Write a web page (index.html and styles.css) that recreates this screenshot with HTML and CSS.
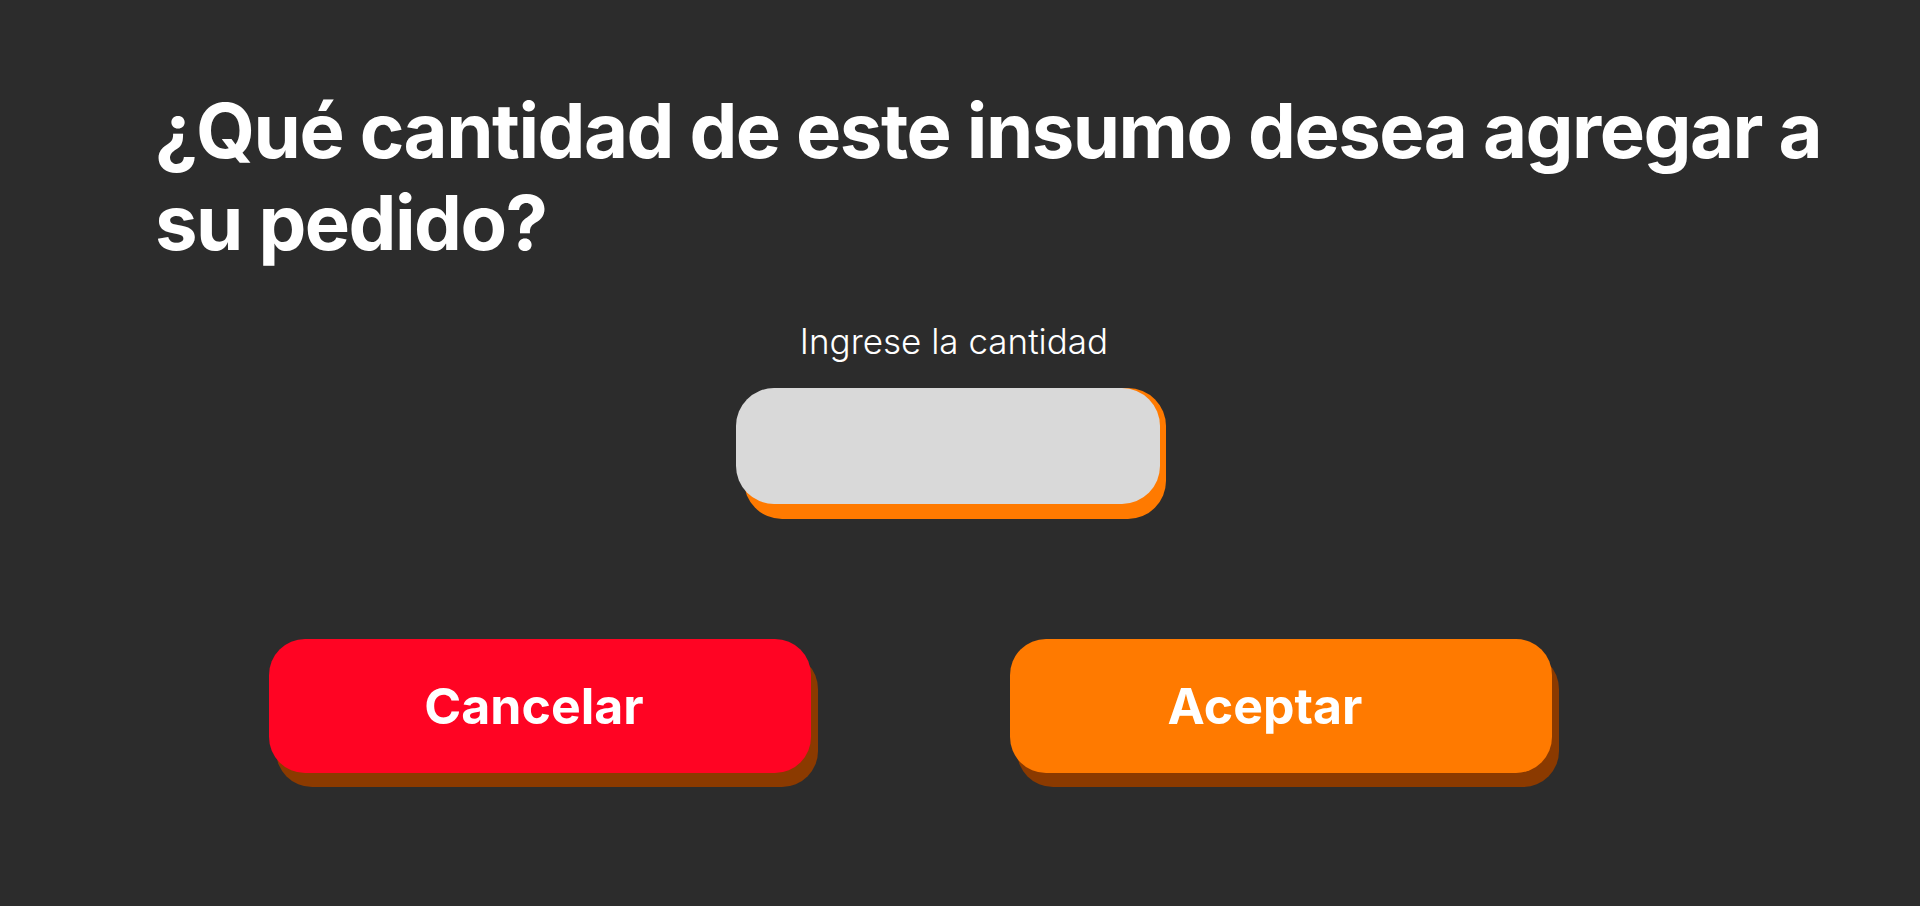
FILE: index.html
```html
<!DOCTYPE html>
<html lang="es">
<head>
<meta charset="utf-8">
<title>Cantidad de insumo</title>
<link rel="stylesheet" href="styles.css">
</head>
<body>
<main class="dialog">
  <h1 class="title">¿Qué cantidad de este insumo desea agregar a su pedido?</h1>
  <section class="field">
    <label class="field-label" for="qty">Ingrese la cantidad</label>
    <div class="input-wrap">
      <input class="qty-input" id="qty" type="text">
    </div>
  </section>
  <div class="actions">
    <button class="btn btn-cancel" type="button">Cancelar</button>
    <button class="btn btn-accept" type="button">Aceptar</button>
  </div>
</main>
</body>
</html>
```

FILE: styles.css
```css
html, body {
  margin: 0;
  padding: 0;
  background: #2c2c2c;
}

body {
  font-family: Inter, "Noto Sans", sans-serif;
  color: #ffffff;
  height: 906px;
  overflow: hidden;
}

.dialog {
  padding: 84px 0 0 155px;
  display: flex;
  flex-direction: column;
  align-items: flex-start;
}

.title {
  margin: 0;
  width: 1700px;
  font-size: 76px;
  line-height: 92px;
  font-weight: 700;
  letter-spacing: -1.5px;
}

.field {
  margin: 51px 0 0 581px;
  width: 424px;
  display: flex;
  flex-direction: column;
  align-items: center;
}

.field-label {
  font-size: 35px;
  line-height: 44px;
  font-weight: 300;
  letter-spacing: 0;
  padding-left: 12px;
  color: #ffffff;
}

.input-wrap {
  position: relative;
  z-index: 0;
  margin-top: 25px;
  width: 424px;
  height: 116px;
}

.input-wrap::before {
  content: "";
  position: absolute;
  left: 8px;
  right: -6px;
  top: 0;
  bottom: -15px;
  border-radius: 38px;
  background: #ff7a00;
  z-index: -1;
}

.qty-input {
  display: block;
  box-sizing: border-box;
  width: 100%;
  height: 100%;
  border: none;
  outline: none;
  border-radius: 38px;
  background: #d9d9d9;
  padding: 0 32px;
  font-family: inherit;
  font-size: 40px;
  color: #2c2c2c;
}

.actions {
  margin: 135px 0 0 114px;
  display: flex;
  gap: 199px;
}

.btn {
  box-sizing: border-box;
  width: 542px;
  height: 134px;
  border: none;
  border-radius: 36px;
  box-shadow: 7px 14px 0 #8b3a00;
  font-family: Inter, "Noto Sans", sans-serif;
  font-size: 50px;
  font-weight: 700;
  color: #ffffff;
  display: flex;
  align-items: center;
  justify-content: center;
  cursor: pointer;
}

.btn-cancel {
  background: #ff0423;
  padding: 0 12px 0 0;
}

.btn-accept {
  background: #ff7a00;
  padding: 0 32px 0 0;
}
```
